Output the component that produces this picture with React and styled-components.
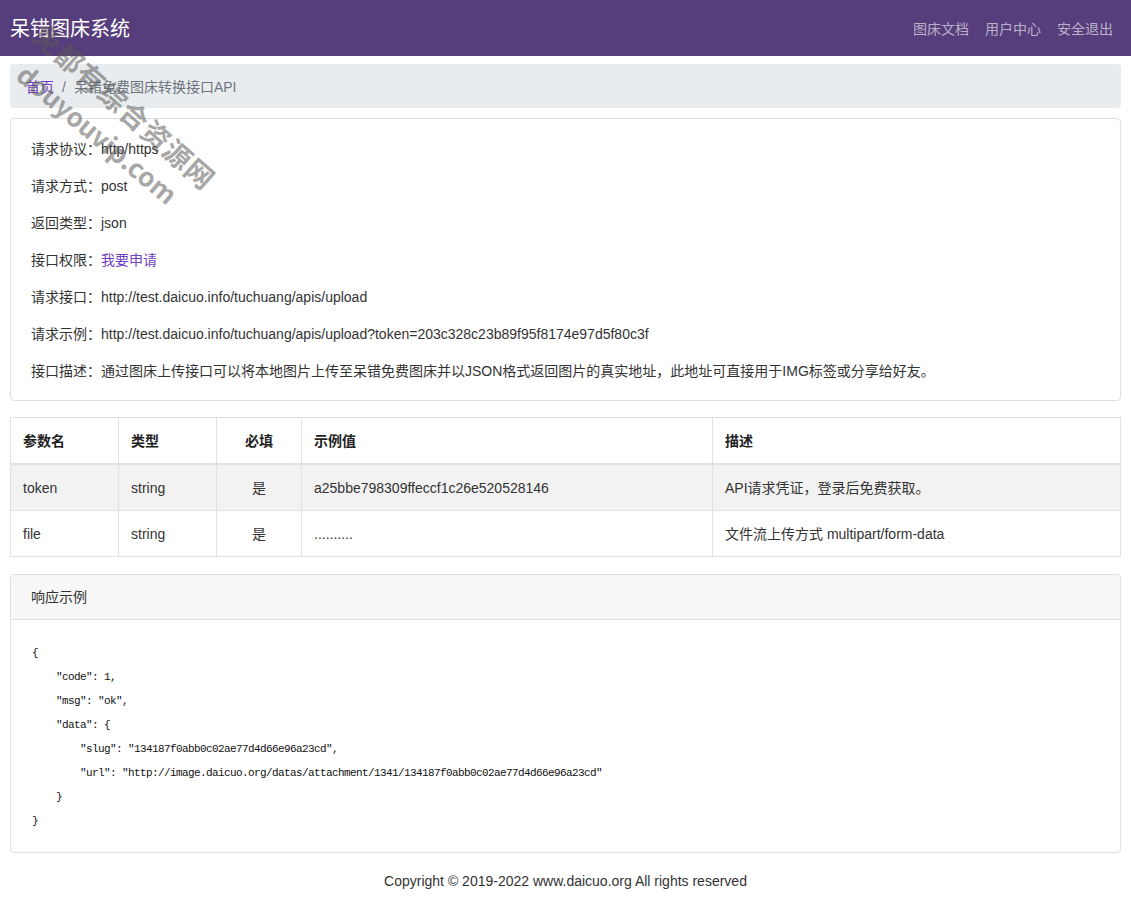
import React from 'react'
import styled, { createGlobalStyle } from 'styled-components'

const GlobalStyle = createGlobalStyle`
  * { box-sizing: border-box; }
  body {
    margin: 0;
    background: #fff;
    color: #333;
    font-family: "Liberation Sans", "Noto Sans CJK SC", sans-serif;
    font-size: 14px;
    line-height: 1.5;
  }
`

const Page = styled.div`
  position: relative;
  min-height: 907px;
  overflow: hidden;
`

const Navbar = styled.header`
  height: 56px;
  background: #563d7c;
  display: flex;
  align-items: center;
  justify-content: space-between;
  padding: 0 10px;
`

const Brand = styled.a`
  color: #fff;
  font-size: 20px;
  font-family: "Noto Sans CJK SC", sans-serif;
  text-decoration: none;
`

const NavLinks = styled.nav`
  display: flex;
`

const NavLink = styled.a`
  color: rgba(255, 255, 255, 0.6);
  font-size: 14px;
  padding: 0 8px;
  text-decoration: none;
  font-family: "Noto Sans CJK SC", sans-serif;
`

const Main = styled.main`
  padding: 8px 10px 0;
  display: flex;
  flex-direction: column;
`

const Breadcrumb = styled.ol`
  list-style: none;
  margin: 0 0 10px;
  padding: 13px 16px 10px;
  background: #e9ecef;
  border-radius: 4px;
  display: flex;
  color: #6c757d;
`

const Crumb = styled.li`
  & + &::before {
    content: '/';
    padding: 0 8px;
    color: #6c757d;
  }
  a {
    color: #6f42c1;
    text-decoration: none;
  }
`

const Card = styled.section`
  border: 1px solid #dfdfdf;
  border-radius: 4px;
  margin-bottom: ${p => p.$mb || 0}px;
  overflow: hidden;
`

const CardBody = styled.div`
  padding: 20px 20px 18px;
  display: flex;
  flex-direction: column;
  gap: 16px;
`

const InfoRow = styled.div`
  line-height: 21px;
  color: #333;
  a {
    color: #6f42c1;
    text-decoration: none;
  }
`

const Table = styled.table`
  width: 100%;
  border-collapse: collapse;
  margin-bottom: 17px;
  border: 1px solid #dee2e6;
  th, td {
    border: 1px solid #dee2e6;
    padding: 13px 12px 11px;
    text-align: left;
    line-height: 21px;
  }
  th {
    font-weight: bold;
    border-bottom-width: 2px;
    color: #222;
  }
`

const Row = styled.tr`
  background: ${p => (p.$striped ? '#f2f2f2' : '#fff')};
`

const Cell = styled.td`
  text-align: ${p => (p.$center ? 'center' : 'left')} !important;
`

const HeadCell = styled.th`
  text-align: ${p => (p.$center ? 'center' : 'left')} !important;
`

const CardHeader = styled.div`
  background: #f7f7f7;
  border-bottom: 1px solid #dfdfdf;
  padding: 12px 20px 11px;
  line-height: 21px;
`

const Code = styled.pre`
  margin: 0;
  padding: 21px 21px 19px;
  font-family: "Liberation Mono", "DejaVu Sans Mono", monospace;
  font-size: 11px;
  letter-spacing: -0.6px;
  line-height: 24px;
  color: #111;
`

const Footer = styled.footer`
  text-align: center;
  padding: 18px 0 0;
  line-height: 21px;
  color: #333;
`

const Watermark = styled.div`
  position: absolute;
  left: ${p => p.$x}px;
  top: ${p => p.$y}px;
  transform: rotate(${p => p.$deg}deg);
  transform-origin: left center;
  font-size: ${p => p.$size}px;
  font-weight: bold;
  color: rgba(90, 90, 90, 0.55);
  white-space: nowrap;
  pointer-events: none;
  letter-spacing: ${p => p.$ls || 0}px;
  font-family: "Noto Sans CJK SC", sans-serif;
`

const params = [
  { name: 'token', type: 'string', required: '是', sample: 'a25bbe798309ffeccf1c26e520528146', desc: 'API请求凭证，登录后免费获取。' },
  { name: 'file', type: 'string', required: '是', sample: '..........', desc: '文件流上传方式 multipart/form-data' }
]

const code = `{
    "code": 1,
    "msg": "ok",
    "data": {
        "slug": "134187f0abb0c02ae77d4d66e96a23cd",
        "url": "http://image.daicuo.org/datas/attachment/1341/134187f0abb0c02ae77d4d66e96a23cd"
    }
}`

const App = () => (
  <Page>
    <GlobalStyle />
    <Navbar>
      <Brand href='#'>呆错图床系统</Brand>
      <NavLinks>
        <NavLink href='#'>图床文档</NavLink>
        <NavLink href='#'>用户中心</NavLink>
        <NavLink href='#'>安全退出</NavLink>
      </NavLinks>
    </Navbar>
    <Main>
      <Breadcrumb>
        <Crumb><a href='#'>首页</a></Crumb>
        <Crumb>呆错免费图床转换接口API</Crumb>
      </Breadcrumb>
      <Card $mb={16}>
        <CardBody>
          <InfoRow>请求协议：http/https</InfoRow>
          <InfoRow>请求方式：post</InfoRow>
          <InfoRow>返回类型：json</InfoRow>
          <InfoRow>接口权限：<a href='#'>我要申请</a></InfoRow>
          <InfoRow>请求接口：http://test.daicuo.info/tuchuang/apis/upload</InfoRow>
          <InfoRow>请求示例：http://test.daicuo.info/tuchuang/apis/upload?token=203c328c23b89f95f8174e97d5f80c3f</InfoRow>
          <InfoRow>接口描述：通过图床上传接口可以将本地图片上传至呆错免费图床并以JSON格式返回图片的真实地址，此地址可直接用于IMG标签或分享给好友。</InfoRow>
        </CardBody>
      </Card>
      <Table>
        <colgroup>
          <col style={{ width: 108 }} />
          <col style={{ width: 98 }} />
          <col style={{ width: 85 }} />
          <col style={{ width: 411 }} />
          <col />
        </colgroup>
        <thead>
          <tr>
            <HeadCell>参数名</HeadCell>
            <HeadCell>类型</HeadCell>
            <HeadCell $center>必填</HeadCell>
            <HeadCell>示例值</HeadCell>
            <HeadCell>描述</HeadCell>
          </tr>
        </thead>
        <tbody>
          {params.map((p, i) => (
            <Row key={p.name} $striped={i % 2 === 0}>
              <Cell>{p.name}</Cell>
              <Cell>{p.type}</Cell>
              <Cell $center>{p.required}</Cell>
              <Cell>{p.sample}</Cell>
              <Cell>{p.desc}</Cell>
            </Row>
          ))}
        </tbody>
      </Table>
      <Card>
        <CardHeader>响应示例</CardHeader>
        <Code>{code}</Code>
      </Card>
    </Main>
    <Footer>Copyright © 2019-2022 www.daicuo.org All rights reserved</Footer>
    <Watermark $x={38} $y={8} $deg={41.5} $size={28} $ls={1}>免都有综合资源网</Watermark>
    <Watermark $x={22} $y={50} $deg={40} $size={26}>douyouvip.com</Watermark>
  </Page>
)

export default App
